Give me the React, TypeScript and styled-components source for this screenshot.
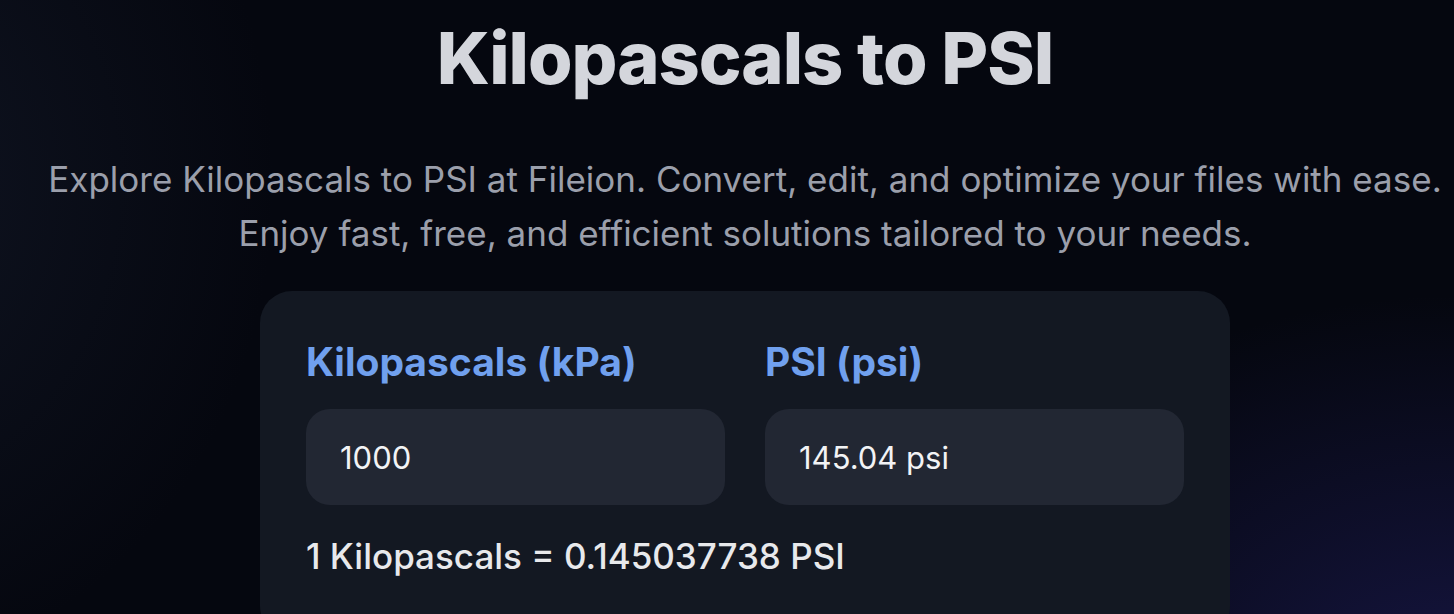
import React from 'react'
import styled, { createGlobalStyle } from 'styled-components'

const GlobalStyle = createGlobalStyle`
  html, body {
    margin: 0;
    padding: 0;
    height: 100%;
    background: #05070f;
  }
  #root {
    min-height: 100%;
  }
  * {
    box-sizing: border-box;
  }
`

const Page = styled.main`
  height: 614px;
  width: 100%;
  padding-left: 36px;
  display: flex;
  flex-direction: column;
  align-items: center;
  overflow: hidden;
  font-family: Inter, 'Noto Sans', sans-serif;
  background:
    radial-gradient(ellipse 760px 560px at 100% 112%, rgba(32, 30, 96, 0.6), rgba(5, 7, 15, 0) 70%),
    radial-gradient(ellipse 600px 700px at -10% 30%, rgba(20, 26, 42, 0.7), rgba(5, 7, 15, 0) 70%),
    #05070f;
`

const Title = styled.h1`
  margin: 14px 0 0;
  font-size: 72px;
  line-height: 88px;
  font-weight: 800;
  letter-spacing: -1px;
  color: #d4d6dc;
`

const Intro = styled.p`
  margin: 50px 0 0;
  white-space: nowrap;
  text-align: center;
  font-size: 35px;
  line-height: 54px;
  font-weight: 400;
  color: #9b9fab;
`

const Card = styled.section`
  flex-shrink: 0;
  margin-top: 31px;
  width: 970px;
  padding: 48px 46px 60px;
  background: #131822;
  border-radius: 32px;
  display: flex;
  flex-direction: column;
`

const Fields = styled.div`
  display: grid;
  grid-template-columns: 1fr 1fr;
  gap: 40px;
`

const Field = styled.div`
  display: flex;
  flex-direction: column;
`

const Label = styled.label`
  font-size: 39px;
  line-height: 46px;
  font-weight: 700;
  color: #70a0ee;
  margin-bottom: 24px;
`

const Input = styled.input`
  height: 96px;
  width: 100%;
  border: none;
  outline: none;
  border-radius: 24px;
  background: #222733;
  padding: 0 34px;
  font-family: Inter, 'Noto Sans', sans-serif;
  font-size: 31px;
  color: #f2f3f5;
`

const Ratio = styled.p`
  margin: 29px 0 0;
  font-size: 35px;
  line-height: 44px;
  font-weight: 500;
  color: #e8e9ec;
`

export default function App() {
  return (
    <>
      <GlobalStyle />
      <Page>
        <Title>Kilopascals to PSI</Title>
        <Intro>
          Explore Kilopascals to PSI at Fileion. Convert, edit, and optimize your files with ease.
          <br />
          Enjoy fast, free, and efficient solutions tailored to your needs.
        </Intro>
        <Card>
          <Fields>
            <Field>
              <Label htmlFor="kpa">Kilopascals (kPa)</Label>
              <Input id="kpa" defaultValue="1000" />
            </Field>
            <Field>
              <Label htmlFor="psi">PSI (psi)</Label>
              <Input id="psi" defaultValue="145.04 psi" readOnly />
            </Field>
          </Fields>
          <Ratio>1 Kilopascals = 0.145037738 PSI</Ratio>
        </Card>
      </Page>
    </>
  )
}
